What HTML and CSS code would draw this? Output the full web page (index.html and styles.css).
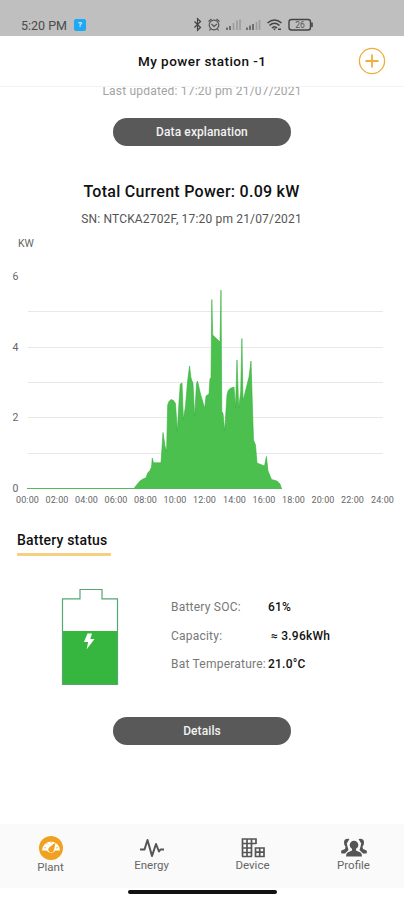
FILE: index.html
```html
<!DOCTYPE html>
<html lang="en">
<head>
    <meta charset="UTF-8">
    <meta name="viewport" content="width=device-width, initial-scale=1.0">
    <title>My power station</title>
    <link rel="stylesheet" href="styles.css">
</head>
<body>
<div class="app">
    <div class="status-bar">
        <span class="time">5:20 PM</span>
        <span class="notice">?</span>
        <svg class="status-icons" width="122" height="16" viewBox="192 17 122 16">
            <!-- bluetooth -->
            <path d="M194.500 21.500l6 6-3 2.800v-11.600l3 2.800-6 6" fill="none" stroke="#444" stroke-width="1.200"/>
            <!-- alarm -->
            <circle cx="214" cy="25" r="4.800" fill="none" stroke="#555" stroke-width="1.200"/>
            <path d="M208.500 21.500l3-2.500M219.500 21.500l-3-2.500M211.500 24l2.500 2.500 3-2.500M210.500 29l-1 1.500M217.500 29l1 1.500" fill="none" stroke="#555" stroke-width="1.200"/>
            <!-- signal -->
            <path d="M227 30v-2.500M230 30v-4" stroke="#666" stroke-width="1.800"/>
            <path d="M233.500 30v-7M237 30v-9.500M240 30v-10.500" stroke="#9b9b9b" stroke-width="1.600"/>
            <path d="M247 30v-2.500M250 30v-4.500M253 30v-6" stroke="#666" stroke-width="1.800"/>
            <path d="M256.500 30v-8M259.500 30v-10" stroke="#9b9b9b" stroke-width="1.600"/>
            <!-- wifi -->
            <path d="M267.500 23q7-6 14 0M269.500 25.500q5-4.500 10 0M272 28q2.500-2.500 5 0" fill="none" stroke="#444" stroke-width="1.600"/>
            <path d="M273 28.500h3l-1.500 2zM278 28.500h3v1.500h-3z" fill="#444"/>
            <!-- battery -->
            <rect x="289" y="19.500" width="21.500" height="10.500" rx="2.500" fill="none" stroke="#444" stroke-width="1.400"/>
            <path d="M312 22.500v4.500" stroke="#444" stroke-width="1.600"/>
            <text class="battery-level" x="300" y="28" text-anchor="middle">26</text>
        </svg>
    </div>

    <div class="header">
        <h1>My power station -1</h1>
        <button class="add-btn">
            <svg width="28" height="28" viewBox="0 0 28 28" fill="none" stroke="#f0ad3f">
                <circle cx="14" cy="14" r="12.600" stroke-width="1.300"/>
                <path d="M14 7.500v13M7.500 14h13" stroke-width="1.800"/>
            </svg>
        </button>
    </div>

    <div class="main-content">
        <p class="updated">Last updated: 17:20 pm 21/07/2021</p>
        <button class="pill-btn">Data explanation</button>

        <div class="power">
            <h2>Total Current Power: 0.09 kW</h2>
            <p>SN: NTCKA2702F, 17:20 pm 21/07/2021</p>
        </div>

        <svg class="chart" width="404" height="274" viewBox="0 236 404 274">
            <path class="grid" d="M28 311.500h355M28 347.500h355M28 382.500h355M28 417.500h355M28 453.500h355"/>
            <path class="area" d="M134 488.500L137 484.500 140 481 143 479 146 477.800 147.700 473 150 470.500 151.500 467 152.300 458 153.500 462.800H161L163 432.500 165 446 166.600 451.500 167.700 405 169 401.500 171 399.500 173.500 400.500 175.500 403.500 177.300 431.500 179 402 180.300 384 182 383 183.400 419.500 185.500 406 187.500 382 189.500 366 191 378 193 383.500 194.600 417 196.500 384 197.500 381 200.500 394 204.700 408.500 206 396 209 394 210 378.500 211 378.500 211.800 299.500 212.700 335 220 342 221 290 221.800 411.500 223 413.500 224.700 431 227 395 228 391 230 388.500 234 387 235.500 408 237 360 238.700 408 240.700 392 241.900 338.500 243 400 244.500 395 249 377 251 361 252.500 409 253.500 440 255.500 445 257 463 264.500 466 266.400 456.500 268 471 271.500 479.500 277 481 280 484 281.500 488.500z"/>
            <path class="axis" d="M27 488.500h255"/>
            <g class="y-labels">
                <text x="18" y="247" class="unit">KW</text>
                <text x="12.500" y="279.500">6</text>
                <text x="12.500" y="350.500">4</text>
                <text x="12.500" y="421">2</text>
                <text x="12.500" y="491.500">0</text>
            </g>
            <g class="x-labels">
                <text x="27.500" y="503">00:00</text>
                <text x="57" y="503">02:00</text>
                <text x="86.500" y="503">04:00</text>
                <text x="116" y="503">06:00</text>
                <text x="145.500" y="503">08:00</text>
                <text x="175" y="503">10:00</text>
                <text x="204.500" y="503">12:00</text>
                <text x="234.500" y="503">14:00</text>
                <text x="264" y="503">16:00</text>
                <text x="293.500" y="503">18:00</text>
                <text x="323" y="503">20:00</text>
                <text x="352.500" y="503">22:00</text>
                <text x="382.500" y="503">24:00</text>
            </g>
        </svg>

        <h3 class="section-title">Battery status</h3>

        <div class="battery">
            <svg width="58" height="98" viewBox="0 0 58 98">
                <path d="M1.500 43h55v53.500h-55z" fill="#37b63f"/>
                <path d="M1.500 10.800H19V1.500H41V10.800H56.500V96.500H1.500z" fill="none" stroke="#55a771" stroke-width="1.200"/>
                <path d="M26.500 45.500h4.500l-1.700 5.500h4.200l-8 10.500 1.700-7.500h-4.200z" fill="#fff"/>
            </svg>
            <div class="battery-info">
                <div class="row"><span>Battery SOC:</span><b>61%</b></div>
                <div class="row"><span>Capacity:</span><b class="approx">≈ 3.96kWh</b></div>
                <div class="row"><span>Bat Temperature:</span><b>21.0°C</b></div>
            </div>
        </div>

        <button class="pill-btn">Details</button>
    </div>

    <div class="tab-bar">
        <a class="tab active">
            <svg width="26" height="26" viewBox="0 0 26 26">
                <circle cx="13" cy="13" r="12" fill="#f1a120"/>
                <path d="M4 15.500a9 9 0 1 1 18 0h-4.500q-4.500 4.500-9 0z" fill="#fff"/>
                <path d="M17.500 7.500l-1.500 7.500a2.900 2.900 0 1 1-5-2.500z" fill="#f1a120"/>
                <path d="M6 12.500l2 .5M8.500 8l1.500 1.500M13 6v2M20 12.500l-2 .5" stroke="#f1a120" stroke-width=".7"/>
            </svg>
            <span>Plant</span>
        </a>
        <a class="tab">
            <svg width="26" height="22" viewBox="0 0 26 22">
                <path d="M1 12.500h4.500L8.500 3l4.500 16 4-12 3 7.500 1.500-2H25" fill="none" stroke="#555" stroke-width="2" stroke-linejoin="round"/>
            </svg>
            <span>Energy</span>
        </a>
        <a class="tab">
            <svg width="26" height="22" viewBox="0 0 26 22" fill="none" stroke="#555" stroke-width="1.700">
                <path d="M2.500 19.500V2H16v5M2.500 6.500H16M2.500 11h9M2.500 15.500h9M7 2v17.500M11.500 2v17.500M2 19.500h10"/>
                <path d="M15.500 11H24v8.500h-8.500zM15.500 15.200H24M19.700 11v8.500"/>
            </svg>
            <span>Device</span>
        </a>
        <a class="tab">
            <svg width="28" height="22" viewBox="0 0 28 22" fill="#555">
                <circle cx="14" cy="8" r="4.300"/>
                <path d="M12 11h4v2.500l4.500 2q1.500 1 1.500 4H6q0-3 1.500-4l4.500-2z"/>
                <path d="M9.500 2Q4 1 4 5.500q0 3 1.500 4L5 12l-3.500 1.500q-1 1 0 3H5L8.500 13 7.500 9.500 6.800 6.500zM18.500 2Q24 1 24 5.500q0 3-1.500 4L23 12l3.500 1.500q1 1 0 3H23L19.500 13l1-3.500.700-3z"/>
            </svg>
            <span>Profile</span>
        </a>
    </div>
    <div class="home-bar"></div>
</div>
</body>
</html>
```
FILE: styles.css
```css
* {
    box-sizing: border-box;
}

body {
    font-family: Roboto, "Liberation Sans", sans-serif;
    background-color: #fff;
    margin: 0;
    color: #111;
}

h1, h2, h3, p {
    margin: 0;
}

button {
    font-family: inherit;
    border: none;
    padding: 0;
    cursor: pointer;
}

svg {
    display: block;
}

.app {
    width: 404px;
    height: 900px;
    display: flex;
    flex-direction: column;
    overflow: hidden;
}

/* Status bar */
.status-bar {
    height: 36px;
    flex: none;
    background-color: #bfbfbf;
    display: flex;
    align-items: center;
    padding: 14px 0 0 21px;
}

.time {
    width: 53px;
    font-size: 12.5px;
    color: #4a4a4a;
    white-space: nowrap;
}

.notice {
    width: 12px;
    height: 12px;
    border-radius: 2px;
    background-color: #20a9f3;
    color: #e3f5ff;
    font-size: 8px;
    font-weight: bold;
    line-height: 12px;
    text-align: center;
}

.status-icons {
    margin-left: 106px;
}

.battery-level {
    font-size: 8.5px;
    fill: #555;
}

/* Header */
.header {
    height: 51px;
    flex: none;
    border-bottom: 1px solid #f3f3f3;
    display: flex;
    align-items: center;
    justify-content: space-between;
    padding: 0 18px 0 138px;
}

.header h1 {
    font-size: 13.5px;
    font-weight: 500;
    letter-spacing: 0.45px;
}

.add-btn {
    background: none;
}

/* Main Content */
.main-content {
    flex: 1;
    overflow: hidden;
    display: flex;
    flex-direction: column;
    align-items: center;
}

.updated {
    height: 16px;
    margin-top: -4px;
    font-size: 12px;
    line-height: 16px;
    letter-spacing: 0.2px;
    color: #a3a3a3;
}

.pill-btn {
    width: 178px;
    height: 28px;
    flex: none;
    margin-top: 19px;
    border-radius: 14px;
    background-color: #595959;
    color: #f2f2f2;
    font-size: 12px;
    font-weight: 500;
    letter-spacing: 0.1px;
}

.power {
    height: 90px;
    padding: 36px 21px 0 0;
    text-align: center;
}

.power h2 {
    font-size: 16px;
    line-height: 20px;
    font-weight: 500;
    letter-spacing: 0.27px;
}

.power p {
    margin-top: 9px;
    font-size: 12px;
    line-height: 16px;
    letter-spacing: 0.17px;
    color: #555;
}

/* Chart */
.chart {
    flex: none;
}

.grid {
    fill: none;
    stroke: #e8e8e8;
}

.area {
    fill: #4cc04e;
    stroke: #35b13c;
    stroke-width: 0.6;
}

.axis {
    stroke: #55b85a;
    stroke-width: 1.2;
}

.y-labels {
    font-size: 10.5px;
    fill: #666;
}

.x-labels {
    font-size: 9px;
    letter-spacing: 0.1px;
    fill: #666;
    text-anchor: middle;
}

/* Battery */
.section-title {
    align-self: flex-start;
    margin: 20px 0 0 17px;
    width: 94px;
    height: 26px;
    border-bottom: 3px solid #f5d080;
    font-size: 14px;
    line-height: 20px;
    font-weight: 500;
    letter-spacing: 0.2px;
    white-space: nowrap;
}

.battery {
    width: 100%;
    margin-top: 32px;
    padding-left: 61px;
    display: flex;
}

.battery-info {
    margin-left: 52px;
    padding-top: 5px;
}

.row {
    height: 28.5px;
    display: flex;
    align-items: center;
    font-size: 12px;
    letter-spacing: 0.22px;
    color: #777;
    white-space: nowrap;
}

.row span {
    width: 97px;
}

.row b {
    font-weight: 500;
    color: #111;
}

.row .approx {
    padding-left: 3px;
}

.battery + .pill-btn {
    margin-top: 31px;
}

/* Bottom tabs */
.tab-bar {
    height: 64px;
    flex: none;
    background-color: #fafafa;
    display: flex;
}

.tab {
    flex: 1;
    display: flex;
    flex-direction: column;
    align-items: center;
    padding-top: 13px;
    font-size: 11.5px;
    line-height: 12px;
    color: #666;
}

.tab.active {
    padding-top: 11px;
}

.home-bar {
    width: 149px;
    height: 4px;
    flex: none;
    margin: 2px auto 6px;
    border-radius: 2px;
    background-color: #111;
}
```
